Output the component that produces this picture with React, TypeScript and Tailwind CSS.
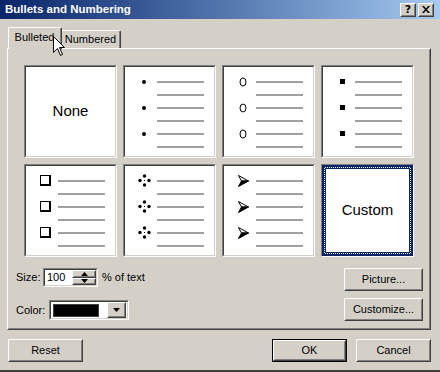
import React from "react";

const FONT = { fontFamily: '"Liberation Sans", Arial, sans-serif' };

function Raised({ className = "", innerClassName = "", children }: { className?: string; innerClassName?: string; children?: React.ReactNode }) {
  return (
    <div className={"border border-t-white border-l-white border-r-[#404040] border-b-[#404040] " + className}>
      <div className={"w-full h-full border border-t-[#d4d0c8] border-l-[#d4d0c8] border-r-[#808080] border-b-[#808080] " + innerClassName}>{children}</div>
    </div>
  );
}

function Sunken({ className = "", innerClassName = "", children }: { className?: string; innerClassName?: string; children?: React.ReactNode }) {
  return (
    <div className={"border border-t-[#808080] border-l-[#808080] border-r-white border-b-white " + className}>
      <div className={"w-full h-full border border-t-[#404040] border-l-[#404040] border-r-[#d4d0c8] border-b-[#d4d0c8] " + innerClassName}>{children}</div>
    </div>
  );
}

const Dot = () => <div className="w-[4px] h-[4px] rounded-full bg-black" />;
const Ring = () => (
  <svg width="8" height="10" viewBox="0 0 8 10">
    <ellipse cx="4" cy="5" rx="3" ry="4" fill="none" stroke="black" strokeWidth="1" />
  </svg>
);
const Square = () => <div className="w-[5px] h-[5px] bg-black" />;
const HollowSquare = () => <div className="w-[11px] h-[11px] border border-black border-r-2 border-b-2 bg-white" />;
const Diamond = () => (
  <svg width="13" height="13" viewBox="0 0 13 13">
    <circle cx="6.5" cy="2" r="1.7" fill="black" />
    <circle cx="2" cy="6.5" r="1.7" fill="black" />
    <circle cx="11" cy="6.5" r="1.7" fill="black" />
    <circle cx="6.5" cy="11" r="1.7" fill="black" />
    <rect x="6" y="6" width="1" height="1" fill="black" />
  </svg>
);
const Arrow = () => (
  <svg width="11" height="12" viewBox="0 0 11 12">
    <path d="M0.5 0.5 L10.5 6 L3.5 6 Z" fill="white" stroke="black" strokeWidth="1" strokeLinejoin="miter" />
    <path d="M0.5 11.5 L10.5 6 L3.5 6 Z" fill="black" stroke="black" strokeWidth="1" />
  </svg>
);

function BulletCell({ bullet }: { bullet: React.ReactNode }) {
  const rows = [];
  for (let i = 0; i < 3; i++) {
    rows.push(
      <div key={"a" + i} className="flex items-center h-[13px]">
        <div className="ml-[7px] w-[24px] flex justify-center items-center">{bullet}</div>
        <div className="ml-[1px] w-[47px] h-[2px] bg-[#a0a0a0]" />
      </div>
    );
    rows.push(
      <div key={"b" + i} className="flex items-center h-[13px]">
        <div className="ml-[32px] w-[47px] h-[2px] bg-[#a0a0a0]" />
      </div>
    );
  }
  return (
    <Sunken className="w-[93px] h-[93px]" innerClassName="bg-white pt-[8px] flex flex-col">
      {rows}
    </Sunken>
  );
}

function Btn({ label, className = "", def = false }: { label: string; className?: string; def?: boolean }) {
  const inner = (
    <Raised className="w-full h-full" innerClassName="bg-[#d4d0c8] flex items-center justify-center text-[11px] text-black">
      {label}
    </Raised>
  );
  if (def) return <div className={"border border-black " + className}>{inner}</div>;
  return <div className={className}>{inner}</div>;
}

export default function App() {
  return (
    <div style={FONT} className="relative w-[440px] h-[372px] bg-[#d4d0c8] flex flex-col border-b-2 border-b-[#404040] overflow-hidden select-none">
      {/* Title bar */}
      <div className="h-[19px] shrink-0 flex items-center justify-between pl-[5px] pr-[6px] bg-gradient-to-r from-[#0a246a] to-[#a6caf0]">
        <span className="text-white font-bold text-[11.5px] leading-none">Bullets and Numbering</span>
        <div className="flex gap-[2px]">
          <Raised className="w-[16px] h-[14px]" innerClassName="bg-[#d4d0c8] flex items-center justify-center">
            <span className="font-bold text-[11px] leading-none text-black" style={{ fontFamily: '"DejaVu Sans", sans-serif' }}>?</span>
          </Raised>
          <Raised className="w-[16px] h-[14px]" innerClassName="bg-[#d4d0c8] flex items-center justify-center">
            <svg width="8" height="7" viewBox="0 0 8 7">
              <path d="M0 0 L2 0 L4 2.5 L6 0 L8 0 L5 3.5 L8 7 L6 7 L4 4.5 L2 7 L0 7 L3 3.5 Z" fill="black" />
            </svg>
          </Raised>
        </div>
      </div>

      {/* Tabs */}
      <div className="mt-[8px] ml-[8px] h-[22px] flex items-end relative z-10 -mb-[1px] shrink-0">
        <div className="w-[54px] h-[22px] bg-[#d4d0c8] border-l border-t border-l-white border-t-white border-r border-r-[#404040] rounded-tl-[2px] rounded-tr-[2px]">
          <div className="w-full h-full border-r border-r-[#808080] flex items-center justify-center text-[11px] text-black pb-[2px]">Bulleted</div>
        </div>
        <div className="w-[59px] h-[18px] mb-[1px] bg-[#d4d0c8] border-t border-t-white border-r border-r-[#404040] rounded-tr-[2px]">
          <div className="w-full h-full border-r border-r-[#808080] flex items-center justify-center text-[11px] text-black">Numbered</div>
        </div>
      </div>

      {/* Panel */}
      <Raised className="ml-[7px] w-[424px] h-[282px] shrink-0" innerClassName="pl-[7px] pr-[6px] pt-[15px] flex flex-col">
        <div className="ml-[8px] grid grid-cols-[repeat(4,93px)] gap-[6px]">
          <Sunken className="w-[93px] h-[93px]" innerClassName="bg-white flex items-center justify-center">
            <span className="text-[15px] text-black">None</span>
          </Sunken>
          <BulletCell bullet={<Dot />} />
          <BulletCell bullet={<Ring />} />
          <BulletCell bullet={<Square />} />
          <BulletCell bullet={<HollowSquare />} />
          <BulletCell bullet={<Diamond />} />
          <BulletCell bullet={<Arrow />} />
          <div className="w-[93px] h-[93px] border border-t-[#808080] border-l-[#808080] border-r-white border-b-white">
            <div className="w-full h-full border-2 border-[#0a246a]">
              <div className="w-full h-full border border-dotted border-[#0a246a] bg-[#fffbe8]">
                <div className="w-full h-full border border-[#0a246a] bg-white flex items-center justify-center">
                  <span className="text-[15px] text-black">Custom</span>
                </div>
              </div>
            </div>
          </div>
        </div>

        <div className="mt-[11px] flex justify-between">
          <div className="flex flex-col gap-[13px] text-[11px] text-black">
            <div className="flex items-center h-[19px]">
              <span className="w-[27px]">Size:</span>
              <Sunken className="w-[55px] h-[19px]" innerClassName="bg-white flex items-center">
                <span className="pl-[2px] flex-1">100</span>
                <div className="w-[24px] h-full flex flex-col">
                  <Raised className="w-full h-1/2" innerClassName="bg-[#d4d0c8] flex items-center justify-center">
                    <svg width="7" height="4" viewBox="0 0 7 4"><path d="M3.5 0 L7 4 L0 4 Z" fill="black" /></svg>
                  </Raised>
                  <Raised className="w-full h-1/2" innerClassName="bg-[#d4d0c8] flex items-center justify-center">
                    <svg width="7" height="4" viewBox="0 0 7 4"><path d="M0 0 L7 0 L3.5 4 Z" fill="black" /></svg>
                  </Raised>
                </div>
              </Sunken>
              <span className="ml-[4px]">% of text</span>
            </div>
            <div className="flex items-center h-[20px]">
              <span className="w-[33px]">Color:</span>
              <Sunken className="w-[80px] h-[20px]" innerClassName="bg-white flex items-center p-[1px]">
                <div className="ml-[1px] w-[46px] h-[13px] bg-black border border-[#404040]" />
                <Raised className="ml-auto w-[19px] h-[16px]" innerClassName="bg-[#d4d0c8] flex items-center justify-center">
                  <svg width="7" height="4" viewBox="0 0 7 4"><path d="M0 0 L7 0 L3.5 4 Z" fill="black" /></svg>
                </Raised>
              </Sunken>
            </div>
          </div>
          <div className="flex flex-col gap-[7px]">
            <Btn label="Picture..." className="w-[79px] h-[23px]" />
            <Btn label="Customize..." className="w-[79px] h-[23px]" />
          </div>
        </div>
      </Raised>

      {/* Bottom buttons */}
      <div className="mt-[9px] px-[8px] flex items-center">
        <Btn label="Reset" className="w-[75px] h-[23px]" />
        <div className="ml-auto flex gap-[9px] mr-[1px]">
          <Btn label="OK" className="w-[75px] h-[23px]" def />
          <Btn label="Cancel" className="w-[75px] h-[23px]" />
        </div>
      </div>

      {/* Mouse cursor */}
      <svg className="absolute left-[53px] top-[36px] z-20" width="13" height="21" viewBox="0 0 13 21">
        <path d="M0.5 0.5 L0.5 16.5 L4.5 12.5 L7.5 19.5 L9.5 18.5 L6.5 11.5 L11.5 11.5 Z" fill="white" stroke="black" strokeWidth="1" strokeLinejoin="miter" />
      </svg>
    </div>
  );
}
